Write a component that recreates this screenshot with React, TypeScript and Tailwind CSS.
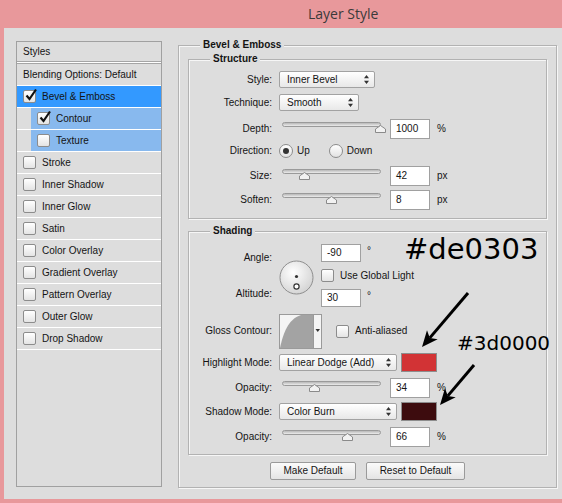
import type { ReactNode } from "react";

interface LayerItem {
  name: string;
  checked?: boolean;
  active?: boolean;
  sub?: boolean;
}

const layers: LayerItem[] = [
  { name: "Bevel & Emboss", checked: true, active: true },
  { name: "Contour", checked: true, sub: true },
  { name: "Texture", sub: true },
  { name: "Stroke" },
  { name: "Inner Shadow" },
  { name: "Inner Glow" },
  { name: "Satin" },
  { name: "Color Overlay" },
  { name: "Gradient Overlay" },
  { name: "Pattern Overlay" },
  { name: "Outer Glow" },
  { name: "Drop Shadow" },
];

const Check = ({ checked = false }: { checked?: boolean }) => (
  <span className="relative flex h-[13px] w-[13px] shrink-0 rounded-[2px] border border-[#8c8c8c] bg-linear-to-b from-white to-[#e4e4e4]">
    {checked && (
      <svg
        width="14"
        height="14"
        viewBox="0 0 14 14"
        className="absolute -top-[3px] left-0"
      >
        <path
          d="M2.5 7.5 L5.5 11 L12 1.5"
          fill="none"
          stroke="#111"
          strokeWidth="2.2"
        />
      </svg>
    )}
  </span>
);

const Radio = ({ on = false }: { on?: boolean }) => (
  <span className="flex h-[14px] w-[14px] shrink-0 items-center justify-center rounded-full border border-[#8c8c8c] bg-linear-to-b from-white to-[#e2e2e2]">
    {on && <span className="h-[6px] w-[6px] rounded-full bg-[#333]" />}
  </span>
);

const UpDown = () => (
  <svg width="5" height="9" viewBox="0 0 5 9">
    <path d="M2.5 0 L5 3.2 H0 Z M0 5.8 H5 L2.5 9 Z" fill="#333" />
  </svg>
);

const Select = ({ value, w }: { value: string; w: string }) => (
  <div
    className={`ml-[7px] flex h-[17px] items-center justify-between rounded-[2px] border border-[#a2a2a2] bg-linear-to-b from-white to-[#e8e8e8] pl-[7px] pr-[5px] ${w}`}
  >
    <span>{value}</span>
    <UpDown />
  </div>
);

const Slider = ({ pct }: { pct: number }) => (
  <div className="relative ml-[10px] h-[20px] w-[99px]">
    <div className="mt-[3px] h-[5px] rounded-full border border-[#9a9a9a] bg-linear-to-b from-[#b8b8b8] to-[#ececec]" />
    <svg
      className="absolute top-[6px] -ml-[5.5px]"
      style={{ left: `${pct}%` }}
      width="11"
      height="8"
      viewBox="0 0 11 8"
    >
      <path
        d="M0.5 7.5 V4 L5.5 0.5 L10.5 4 V7.5 Z"
        fill="#f2f2f2"
        stroke="#8a8a8a"
      />
    </svg>
  </div>
);

const NumBox = ({
  value,
  w = "w-[40px]",
  ml = "ml-[9px]",
  h = "h-[20px]",
}: {
  value: string;
  w?: string;
  ml?: string;
  h?: string;
}) => (
  <div
    className={`flex items-center border border-[#a0a0a0] bg-white pl-[5px] ${w} ${ml} ${h}`}
  >
    {value}
  </div>
);

const Label = ({ children }: { children: ReactNode }) => (
  <div className="w-[83px] shrink-0 text-right">{children}</div>
);

const Group = ({
  title,
  className,
  children,
}: {
  title: string;
  className: string;
  children: ReactNode;
}) => (
  <div
    className={`border border-[#b2b2b2] shadow-[1px_1px_0_#f6f6f6,inset_1px_1px_0_#f6f6f6] ${className}`}
  >
    <div className="-mt-[7px] ml-[21px] w-fit bg-[#dddddd] px-[3px] font-bold leading-[12px]">
      {title}
    </div>
    {children}
  </div>
);

const SliderRow = ({
  label,
  pct,
  value,
  unit,
  mt,
}: {
  label: string;
  pct: number;
  value: string;
  unit: string;
  mt: string;
}) => (
  <div className={`flex h-[20px] items-center ${mt}`}>
    <Label>{label}</Label>
    <Slider pct={pct} />
    <NumBox value={value} />
    <span className="ml-[7px]">{unit}</span>
  </div>
);

const Dial = () => (
  <svg width="35" height="35" viewBox="0 0 35 35" className="ml-[7px] mt-[16px]">
    <defs>
      <radialGradient id="dial" cx="40%" cy="35%" r="70%">
        <stop offset="0" stopColor="#ffffff" />
        <stop offset="1" stopColor="#d2d2d2" />
      </radialGradient>
    </defs>
    <circle cx="17.5" cy="17.5" r="16.5" fill="url(#dial)" stroke="#8e8e8e" />
    <circle cx="17.5" cy="16.5" r="1.6" fill="#333" />
    <circle cx="17.5" cy="26.5" r="2.6" fill="#fff" stroke="#333" strokeWidth="1.2" />
  </svg>
);

const Contour = () => (
  <svg width="43" height="35" viewBox="0 0 43 35" className="ml-[7px]">
    <rect x="0.5" y="0.5" width="42" height="34" fill="#f4f4f4" stroke="#9a9a9a" />
    <path d="M1 34 C 4 20, 9 5, 22 1 L 34 1 L 34 34 Z" fill="#a3a3a3" />
    <line x1="34.5" y1="1" x2="34.5" y2="34" stroke="#9a9a9a" />
    <path d="M36.5 15 H41 L38.75 18 Z" fill="#333" />
  </svg>
);

const Swatch = ({ color }: { color: string }) => (
  <div className={`ml-[4px] h-[19px] w-[36px] border border-[#8d8d8d] ${color}`} />
);

export default function App() {
  return (
    <div className="relative h-[503px] w-[562px] overflow-hidden bg-[#e8989b] font-['Liberation_Sans',Arial,sans-serif] text-[10px] leading-[12px] text-[#141414]">
      {/* Title bar */}
      <div className="h-[28px] pl-[308px] font-['Open_Sans',sans-serif] text-[14px] leading-[27px] text-[#3a3a3a]">
        Layer Style
      </div>

      {/* Dialog body */}
      <div className="ml-[4px] flex h-[471px] bg-[#dddddd] pl-[12px] pt-[13px]">
        {/* Styles list */}
        <div className="h-[446px] w-[146px] shrink-0 border border-[#a0a0a0]">
          <div className="flex h-[20px] items-center border-b border-[#a5a5a5] pl-[6px]">
            Styles
          </div>
          <div className="h-px bg-white" />
          <div className="h-px bg-[#a5a5a5]" />
          <div className="flex h-[22px] items-center border-b border-white pl-[6px]">
            Blending Options: Default
          </div>
          {layers.map((item) => (
            <div key={item.name} className="border-b border-white">
              <div
                className={`flex h-[21px] items-center gap-[6px] pl-[6px] ${
                  item.active
                    ? "bg-[#3399ff]"
                    : item.sub
                      ? "ml-[14px] bg-[#88b9ee]"
                      : ""
                }`}
              >
                <Check checked={item.checked} />
                <span>{item.name}</span>
              </div>
            </div>
          ))}
        </div>

        {/* Bevel & Emboss */}
        <Group title="Bevel & Emboss" className="ml-[16px] mt-[4px] h-[443px] w-[379px]">
          <Group title="Structure" className="ml-[9px] mt-[8px] w-[359px] pb-[8px]">
            <div className="mt-[6px] flex h-[17px] items-center">
              <Label>Style:</Label>
              <Select value="Inner Bevel" w="w-[96px]" />
            </div>
            <div className="mt-[6px] flex h-[17px] items-center">
              <Label>Technique:</Label>
              <Select value="Smooth" w="w-[80px]" />
            </div>
            <SliderRow label="Depth:" pct={99} value="1000" unit="%" mt="mt-[8px]" />
            <div className="mt-[5px] flex h-[14px] items-center">
              <Label>Direction:</Label>
              <span className="ml-[7px]">
                <Radio on />
              </span>
              <span className="ml-[4px]">Up</span>
              <span className="ml-[19px]">
                <Radio />
              </span>
              <span className="ml-[4px]">Down</span>
            </div>
            <SliderRow label="Size:" pct={23} value="42" unit="px" mt="mt-[8px]" />
            <SliderRow label="Soften:" pct={50} value="8" unit="px" mt="mt-[4px]" />
          </Group>

          <Group title="Shading" className="ml-[9px] mt-[12px] w-[359px] pb-[7px]">
            <div className="mt-[7px] flex h-[64px]">
              <div className="w-[83px] shrink-0 text-right">
                <div className="mt-[8px]">Angle:</div>
                <div className="mt-[24px]">Altitude:</div>
              </div>
              <Dial />
              <div className="ml-[7px] flex flex-col">
                <div className="flex h-[18px]">
                  <NumBox value="-90" ml="ml-0" h="h-[18px]" />
                  <span className="ml-[6px] mt-[1px]">°</span>
                </div>
                <div className="mt-[7px] flex h-[13px] items-center gap-[6px]">
                  <Check />
                  <span>Use Global Light</span>
                </div>
                <div className="mt-[7px] flex h-[18px]">
                  <NumBox value="30" ml="ml-0" h="h-[18px]" />
                  <span className="ml-[6px] mt-[1px]">°</span>
                </div>
              </div>
            </div>

            <div className="mt-[6px] flex h-[34px] items-center">
              <Label>Gloss Contour:</Label>
              <Contour />
              <span className="ml-[14px]">
                <Check />
              </span>
              <span className="ml-[6px]">Anti-aliased</span>
            </div>

            <div className="mt-[5px] flex h-[19px] items-center">
              <Label>Highlight Mode:</Label>
              <Select value="Linear Dodge (Add)" w="w-[118px]" />
              <Swatch color="bg-[#d23335]" />
            </div>
            <SliderRow label="Opacity:" pct={33} value="34" unit="%" mt="mt-[6px]" />
            <div className="mt-[4px] flex h-[19px] items-center">
              <Label>Shadow Mode:</Label>
              <Select value="Color Burn" w="w-[118px]" />
              <Swatch color="bg-[#3d0c0e]" />
            </div>
            <SliderRow label="Opacity:" pct={66} value="66" unit="%" mt="mt-[6px]" />
          </Group>

          <div className="mt-[7px] flex justify-center gap-[10px]">
            <button className="h-[18px] w-[86px] rounded-[2px] border border-[#9a9a9a] bg-linear-to-b from-[#fbfbfb] to-[#e4e4e4] text-[10px]">
              Make Default
            </button>
            <button className="h-[18px] w-[99px] rounded-[2px] border border-[#9a9a9a] bg-linear-to-b from-[#fbfbfb] to-[#e4e4e4] text-[10px]">
              Reset to Default
            </button>
          </div>
        </Group>
      </div>

      {/* Annotations */}
      <div className="absolute left-[404px] top-[235px] font-['DejaVu_Sans',sans-serif] text-[29px] leading-[29px] text-black">
        #de0303
      </div>
      <div className="absolute left-[457px] top-[333px] font-['DejaVu_Sans',sans-serif] text-[20px] leading-[20px] text-black">
        #3d0000
      </div>
      <svg
        className="pointer-events-none absolute left-0 top-0"
        width="562"
        height="503"
        viewBox="0 0 562 503"
      >
        <line x1="468" y1="293" x2="429.8" y2="337.9" stroke="#000" strokeWidth="3" />
        <polygon points="422,347 437.7,339.3 429.8,337.9 427,330.3" fill="#000" />
        <line x1="474" y1="365" x2="447.8" y2="395.9" stroke="#000" strokeWidth="3" />
        <polygon points="440,405 455.7,397.3 447.8,395.9 445,388.3" fill="#000" />
      </svg>
    </div>
  );
}
